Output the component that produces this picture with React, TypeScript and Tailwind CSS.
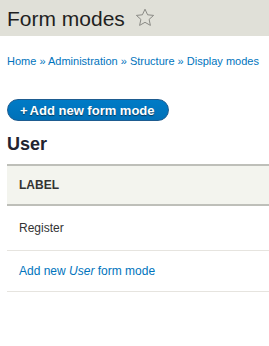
import React from "react";

export default function App() {
  return (
    <div className="w-[269px] h-[346px] bg-white overflow-hidden" style={{ fontFamily: '"Liberation Sans", Arial, sans-serif' }}>
      <div className="h-[36px] bg-[#e0e0d8] flex items-center pl-[7px]">
        <h1 className="text-[21px] leading-none text-[#1f1f1f] font-normal">Form modes</h1>
        <svg className="ml-[10px] -mt-[2px]" width="20" height="19" viewBox="0 0 20 19">
          <path d="M10 1.2 L12.6 6.8 L18.6 7.4 L14.1 11.4 L15.4 17.4 L10 14.3 L4.6 17.4 L5.9 11.4 L1.4 7.4 L7.4 6.8 Z" fill="none" stroke="#8a8a85" strokeWidth="1" strokeLinejoin="round" />
        </svg>
      </div>
      <div className="pl-[7px]">
        <div className="mt-[18px] text-[11px] leading-[14px] text-[#0074bd]">
          <a>Home</a> » <a>Administration</a> » <a>Structure</a> » <a>Display modes</a>
        </div>
        <div className="mt-[31px]">
          <button className="h-[22px] pl-[12px] pr-[13px] rounded-full bg-gradient-to-b from-[#007bc6] to-[#0071b8] border border-[#1e5c90] text-white font-bold text-[13px] leading-none flex items-center" style={{ textShadow: "0 1px 1px rgba(0,0,0,0.5)" }}>
            <span className="mr-[2px]">+</span>Add new form mode
          </button>
        </div>
        <h2 className="mt-[12px] text-[18px] leading-[22px] font-bold text-[#222330]">User</h2>
        <div className="mt-[9px]">
          <div className="h-[42px] bg-[#f3f4ee] border-t-2 border-b-2 border-[#bebfb9] flex items-center pl-[12px] text-[12px] font-bold text-[#333] uppercase">Label</div>
          <div className="h-[45px] border-b border-[#e6e4df] flex items-center pl-[12px] text-[12px] text-[#333]">Register</div>
          <div className="h-[41px] border-b border-[#e6e4df] flex items-center pl-[12px] text-[12px] text-[#0074bd]">
            <span>Add new <em>User</em> form mode</span>
          </div>
        </div>
      </div>
    </div>
  );
}
